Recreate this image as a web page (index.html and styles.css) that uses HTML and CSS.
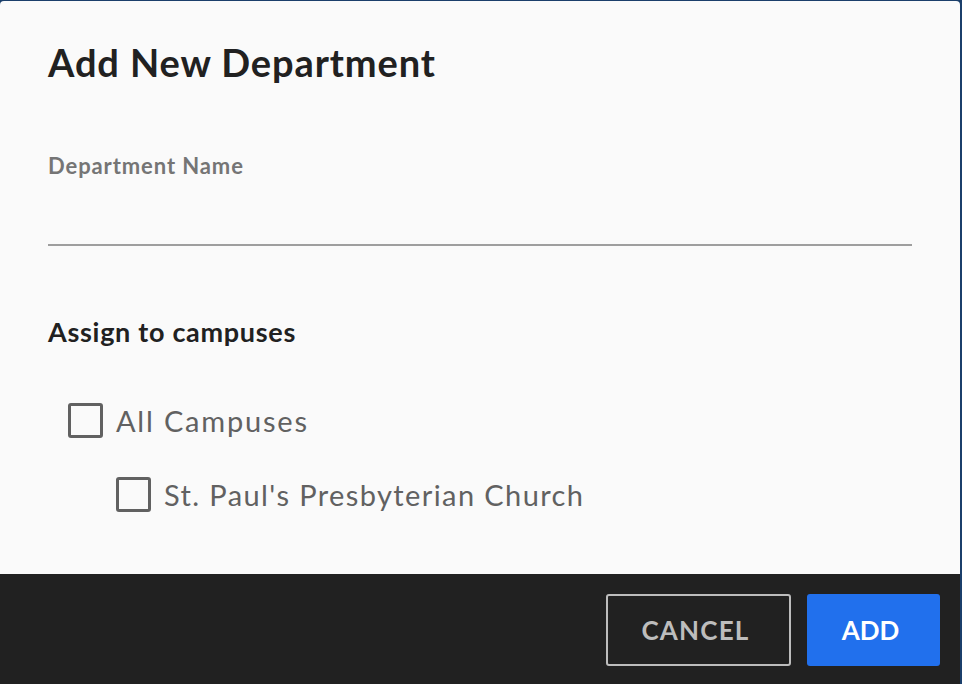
FILE: index.html
```html
<!DOCTYPE html>
<html>
<head>
<meta charset="utf-8">
<link rel="stylesheet" href="styles.css">
</head>
<body>
<div class="dialog">
  <div class="content">
    <h1 class="title">Add New Department</h1>
    <div class="field">
      <label class="field-label">Department Name</label>
      <div class="field-input"></div>
    </div>
    <h2 class="section-title">Assign to campuses</h2>
    <div class="options">
      <div class="option">
        <span class="checkbox"></span>
        <span class="option-text">All Campuses</span>
      </div>
      <div class="option option-child">
        <span class="checkbox"></span>
        <span class="option-text">St. Paul's Presbyterian Church</span>
      </div>
    </div>
  </div>
  <div class="footer">
    <button class="btn btn-cancel">CANCEL</button>
    <button class="btn btn-add">ADD</button>
  </div>
</div>
</body>
</html>
```
FILE: styles.css
```css
html, body {
  margin: 0;
  padding: 0;
  height: 100%;
}
body {
  background: #1b3f6b;
  font-family: Lato, "Open Sans", Arial, sans-serif;
  overflow: hidden;
}
.dialog {
  margin-top: 1px;
  width: 960px;
  height: 683px;
  background: #fafafa;
  border-radius: 4px 4px 0 0;
  display: flex;
  flex-direction: column;
  overflow: hidden;
}
.content {
  flex: 1;
  padding: 0 48px 0 48px;
}
.title {
  margin: 0;
  padding-top: 37px;
  font-size: 38px;
  line-height: 48px;
  font-weight: 700;
  letter-spacing: 0.9px;
  color: #212121;
}
.field {
  margin-top: 68px;
}
.field-label {
  display: block;
  font-size: 22px;
  line-height: 24px;
  font-weight: 700;
  letter-spacing: 0.9px;
  color: #757575;
}
.field-input {
  height: 0;
  margin-top: 66px;
  border-top: 2px solid #9e9e9e;
}
.section-title {
  margin: 70px 0 0;
  font-size: 27px;
  line-height: 32px;
  font-weight: 700;
  letter-spacing: 0.7px;
  color: #212121;
}
.options {
  margin-top: 53px;
  padding-left: 20px;
  display: flex;
  flex-direction: column;
  gap: 36px;
}
.option {
  display: flex;
  align-items: center;
  gap: 13px;
}
.option-child {
  padding-left: 48px;
}
.checkbox {
  width: 29px;
  height: 29px;
  border: 3px solid #616161;
  border-radius: 3px;
  flex: none;
}
.option-text {
  font-size: 29px;
  line-height: 36px;
  padding-top: 2px;
  letter-spacing: 1.4px;
  color: #616161;
}
.option:first-child .option-text {
  letter-spacing: 1.8px;
}
.footer {
  height: 110px;
  background: #212121;
  display: flex;
  justify-content: flex-end;
  align-items: flex-start;
  padding: 20px 20px 0 0;
  box-sizing: border-box;
  gap: 16px;
}
.btn {
  height: 72px;
  font-family: inherit;
  font-size: 26px;
  font-weight: 700;
  border-radius: 3px;
  cursor: pointer;
}
.btn-cancel {
  width: 185px;
  background: transparent;
  border: 2px solid #bdbdbd;
  color: #bdbdbd;
  letter-spacing: 1.2px;
  padding: 0 6px 0 0;
}
.btn-add {
  width: 133px;
  background: #2170ed;
  border: none;
  color: #ffffff;
  padding: 0 6px 0 0;
}
```
